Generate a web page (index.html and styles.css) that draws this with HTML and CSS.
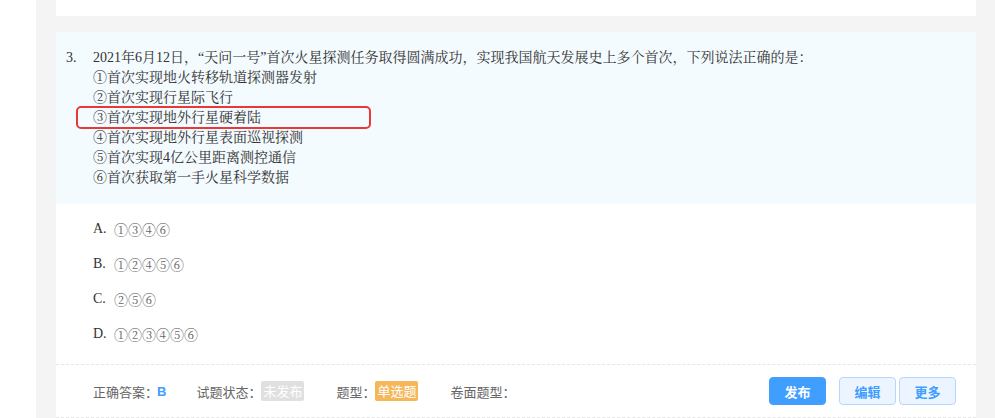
FILE: index.html
```html
<!DOCTYPE html>
<html lang="zh">
<head>
<meta charset="utf-8">
<link rel="stylesheet" href="styles.css">
</head>
<body>
<div class="layout">
  <div class="side"></div>
  <div class="main">
    <div class="prev-card"></div>
    <div class="q-card">
      <div class="stem">
        <div class="q-num">3.</div>
        <div class="q-text">
          <div>2021年6月12日，“天问一号”首次火星探测任务取得圆满成功，实现我国航天发展史上多个首次，下列说法正确的是：</div>
          <div>①首次实现地火转移轨道探测器发射</div>
          <div>②首次实现行星际飞行</div>
          <div>③首次实现地外行星硬着陆</div>
          <div>④首次实现地外行星表面巡视探测</div>
          <div>⑤首次实现4亿公里距离测控通信</div>
          <div>⑥首次获取第一手火星科学数据</div>
        </div>
        <div class="mark"></div>
      </div>
      <div class="options">
        <div class="opt"><span class="opt-key">A.</span><span class="opt-val">①③④⑥</span></div>
        <div class="opt"><span class="opt-key">B.</span><span class="opt-val">①②④⑤⑥</span></div>
        <div class="opt"><span class="opt-key">C.</span><span class="opt-val">②⑤⑥</span></div>
        <div class="opt"><span class="opt-key">D.</span><span class="opt-val">①②③④⑤⑥</span></div>
      </div>
      <div class="footer">
        <div class="meta meta-first">正确答案：<span class="answer">B</span></div>
        <div class="meta">试题状态：<span class="tag tag-gray">未发布</span></div>
        <div class="meta">题型：<span class="tag tag-orange">单选题</span></div>
        <div class="meta">卷面题型：</div>
        <div class="actions">
          <button class="btn btn-primary">发布</button>
          <button class="btn btn-plain btn-edit">编辑</button>
          <button class="btn btn-plain">更多</button>
        </div>
      </div>
    </div>
  </div>
</div>
</body>
</html>
```

FILE: styles.css
```css
html, body {
  margin: 0;
  padding: 0;
  background: #ffffff;
}
.layout {
  display: flex;
  width: 995px;
  height: 418px;
  overflow: hidden;
}
.side {
  width: 36px;
  flex: none;
  background: #ffffff;
}
.main {
  flex: 1;
  background: #f4f4f4;
  padding: 0 19px 0 20px;
}
.prev-card {
  height: 16px;
  background: #ffffff;
  margin-bottom: 16px;
}
.q-card {
  background: #ffffff;
}
.stem {
  position: relative;
  display: flex;
  background: #f4fbff;
  padding: 16px 0 16px 10px;
  font-family: "Liberation Serif", "Noto Serif CJK SC", "Noto Sans CJK SC", serif;
  font-size: 14px;
  line-height: 20px;
  color: #333333;
}
.q-num {
  width: 27px;
  flex: none;
}
.mark {
  position: absolute;
  left: 20px;
  top: 74px;
  width: 291px;
  height: 19px;
  border: 2px solid #e8383a;
  border-radius: 5px;
}
.options {
  padding: 7px 0 13px 37px;
  font-family: "Liberation Serif", "Noto Serif CJK SC", "Noto Sans CJK SC", serif;
  font-size: 14px;
  color: #333333;
}
.opt {
  height: 35px;
  display: flex;
  align-items: center;
}
.opt-key {
  width: 21px;
}
.opt-val {
  color: #666666;
  font-size: 14px;
}
.footer {
  display: flex;
  align-items: center;
  height: 52px;
  border-top: 1px dashed #e6e6e6;
  border-bottom: 1px dashed #e6e6e6;
  padding: 0 20px 0 37px;
  font-family: "Noto Sans CJK SC", sans-serif;
  font-size: 13px;
  color: #666666;
}
.meta {
  display: flex;
  align-items: center;
  margin-right: 32px;
  white-space: nowrap;
}
.meta-first {
  margin-right: 30px;
}
.answer {
  color: #409eff;
  font-weight: bold;
  font-family: "Liberation Sans", sans-serif;
  font-size: 13px;
  margin-left: -1px;
}
.tag {
  display: inline-block;
  height: 20px;
  line-height: 20px;
  padding: 0 2px;
  border-radius: 2px;
  color: #ffffff;
}
.tag-gray {
  background: #e0e0e0;
}
.tag-orange {
  background: #f5b75a;
}
.actions {
  margin-left: auto;
  display: flex;
  align-items: center;
}
.btn {
  width: 57px;
  height: 28px;
  border-radius: 4px;
  font-family: "Noto Sans CJK SC", sans-serif;
  font-size: 13px;
  font-weight: bold;
  padding: 0;
  cursor: pointer;
}
.btn-primary {
  background: #409eff;
  border: 1px solid #409eff;
  color: #ffffff;
}
.btn-plain {
  background: #ecf5ff;
  border: 1px solid #b3d8ff;
  color: #409eff;
  margin-left: 3px;
}
.btn-edit {
  margin-left: 13px;
}
```
